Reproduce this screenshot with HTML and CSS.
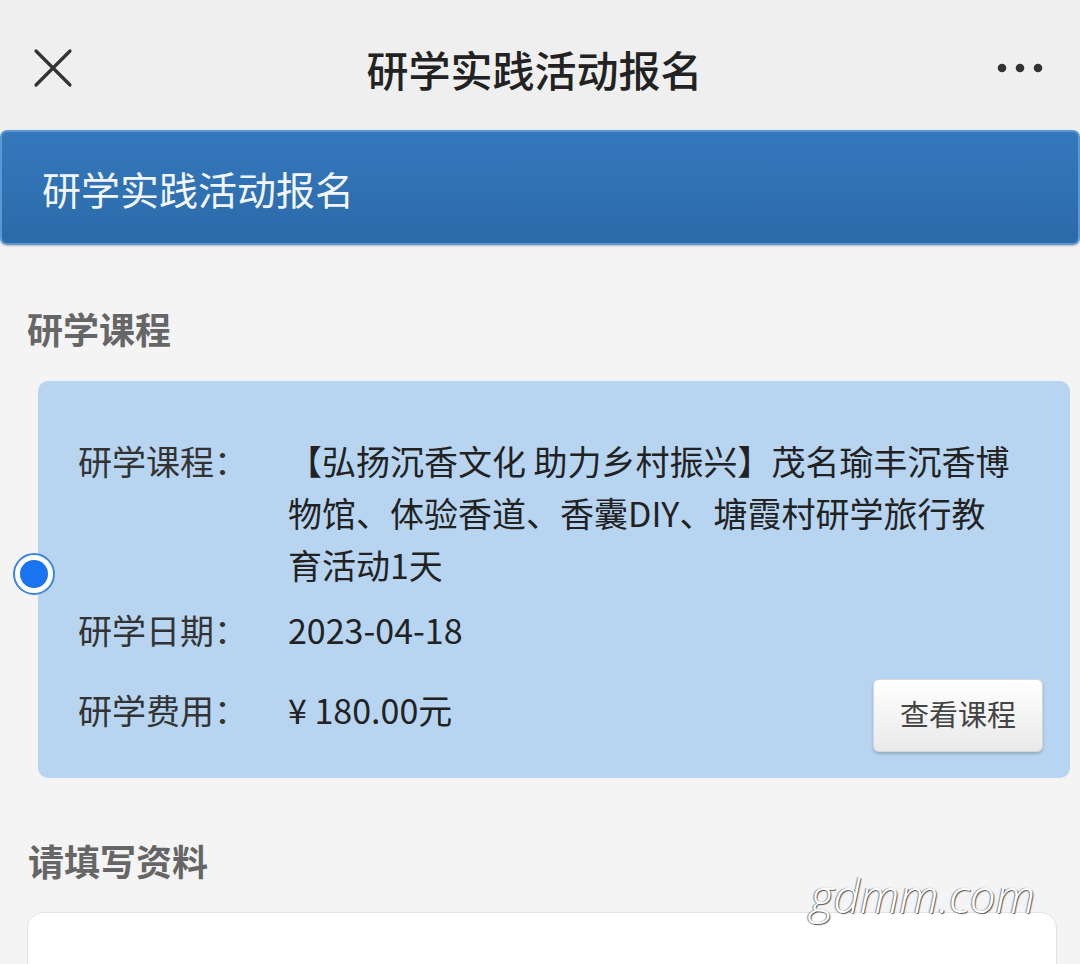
FILE: index.html
```html
<!DOCTYPE html>
<html lang="zh-CN">
<head>
  <meta charset="UTF-8" />
  <meta name="viewport" content="width=device-width, initial-scale=1.0"/>
  <title>研学实践活动报名</title>
  <link rel="stylesheet" href="styles.css">
</head>
<body>
  <!-- top bar -->
  <div class="navbar">
    <span class="nav-close">
      <svg width="40" height="40" viewBox="0 0 40 40"><path d="M3 3 L37 37 M37 3 L3 37" stroke="#333" stroke-width="3.2" stroke-linecap="round" fill="none"/></svg>
    </span>
    <div class="nav-title">研学实践活动报名</div>
    <span class="nav-more">
      <svg width="50" height="12" viewBox="0 0 50 12"><circle cx="6" cy="6" r="4.3" fill="#333"/><circle cx="24" cy="6" r="4.3" fill="#333"/><circle cx="42" cy="6" r="4.3" fill="#333"/></svg>
    </span>
  </div>

  <div class="banner">研学实践活动报名</div>

  <h3 class="section-title">研学课程</h3>

  <div class="course">
    <span class="radio"><span class="radio-dot"></span></span>
    <div class="course-card">
      <div class="row">
        <span class="label">研学课程：</span>
        <span class="value">【弘扬沉香文化 助力乡村振兴】茂名瑜丰沉香博物馆、体验香道、香囊DIY、塘霞村研学旅行教育活动1天</span>
      </div>
      <div class="row row-date">
        <span class="label">研学日期：</span>
        <span class="value">2023-04-18</span>
      </div>
      <div class="row row-fee">
        <span class="label">研学费用：</span>
        <span class="value">¥ 180.00元</span>
        <button class="btn-view">查看课程</button>
      </div>
    </div>
  </div>

  <h3 class="section-title section-form">请填写资料</h3>

  <div class="form-card"></div>

  <div class="watermark">gdmm.com</div>
</body>
</html>
```

FILE: styles.css
```css
body {
  margin: 0;
  background: #f4f4f4;
  font-family: "Noto Sans CJK SC", "Liberation Sans", sans-serif;
  color: #333;
  width: 1080px;
  height: 964px;
  overflow: hidden;
  position: relative;
}
.navbar {
  height: 130px;
  background: #efefef;
  display: flex;
  align-items: center;
  justify-content: space-between;
  padding: 6px 34px 0 33px;
  box-sizing: border-box;
}
.nav-close {
  width: 40px;
  height: 40px;
  display: flex;
}
.nav-title {
  font-size: 42px;
  font-weight: 500;
  color: #222;
}
.nav-more {
  display: flex;
  width: 50px;
}
.banner {
  height: 115px;
  box-sizing: border-box;
  background: linear-gradient(#3479bd, #2c6aa9);
  border: 2px solid #5b97d2;
  border-radius: 7px;
  color: #f2f6fb;
  font-size: 39px;
  display: flex;
  align-items: center;
  padding-left: 40px;
  box-shadow: 0 1px 2px rgba(0,0,0,0.25);
}
.section-title {
  margin: 58px 0 0 27px;
  font-size: 36px;
  line-height: 50px;
  font-weight: 700;
  color: #666;
}
.section-form {
  margin-top: 57px;
  margin-left: 28px;
}
.course {
  display: flex;
  align-items: center;
  margin: 28px 10px 0 13px;
}
.radio {
  position: relative;
  z-index: 1;
  width: 42px;
  height: 42px;
  margin-right: -17px;
  margin-top: -12px;
  box-sizing: border-box;
  border-radius: 50%;
  background: #fff;
  border: 2px solid #3d86e0;
  display: flex;
  align-items: center;
  justify-content: center;
  flex-shrink: 0;
}
.radio-dot {
  width: 28px;
  height: 28px;
  border-radius: 50%;
  background: #1a74ef;
}
.course-card {
  flex: 1;
  background: #b7d5f1;
  border-radius: 10px;
  padding: 54px 27px 26px 40px;
}
.row {
  display: flex;
  align-items: flex-start;
  font-size: 34px;
  line-height: 52px;
}
.label {
  width: 210px;
  flex-shrink: 0;
  color: #333;
}
.value {
  max-width: 722px;
  color: #222;
}
.row-date {
  margin-top: 13px;
}
.row-fee {
  margin-top: 23px;
}
.row-fee .label,
.row-fee .value {
  line-height: 62px;
}
.btn-view {
  margin-left: auto;
  width: 170px;
  height: 73px;
  font-family: inherit;
  font-size: 29px;
  line-height: 1;
  padding-bottom: 6px;
  color: #444;
  background: linear-gradient(#ffffff, #e9e9e9);
  border: 1px solid #d6d6d6;
  border-radius: 6px;
  box-shadow: 0 2px 3px rgba(0,0,0,0.2);
}
.form-card {
  margin: 27px 23px 0 27px;
  height: 80px;
  background: #fff;
  border: 1px solid #e3e3e3;
  border-radius: 16px;
}
.watermark {
  position: absolute;
  left: 810px;
  top: 864px;
  font-family: "Open Sans", "DejaVu Sans", sans-serif;
  font-weight: 300;
  font-style: italic;
  font-size: 46px;
  color: #fff;
  text-shadow: 1px 1px 1px #555, -1px 0 1px #888;
}
```
